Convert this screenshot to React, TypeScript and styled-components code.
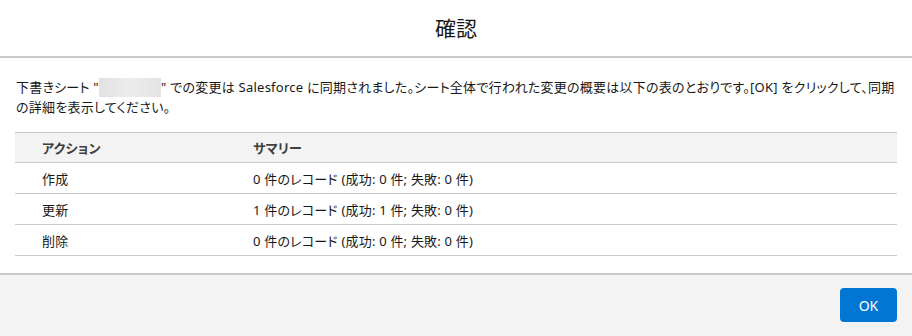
import React from "react";
import styled, { createGlobalStyle } from "styled-components";

const Global = createGlobalStyle`
  html, body { margin: 0; padding: 0; background: #ffffff; }
  body {
    font-family: "Noto Sans", "Noto Sans CJK JP", sans-serif;
    color: #181818;
    -webkit-font-smoothing: antialiased;
  }
`;

const Modal = styled.div`
  height: 336px;
  display: flex;
  flex-direction: column;
  background: #ffffff;
`;

const Header = styled.header`
  height: 56px;
  display: flex;
  align-items: center;
  justify-content: center;
  border-bottom: 2px solid #c9c9c9;
  box-sizing: content-box;
`;

const Title = styled.h2`
  margin: 0;
  font-size: 21px;
  font-weight: 400;
  color: #181818;
  line-height: 1;
`;

const Body = styled.div`
  padding: 19px 15px 0;
`;

const Message = styled.p`
  margin: 0 0 15px 1px;
  font-size: 13px;
  line-height: 20px;
  letter-spacing: 0.25px;
  font-feature-settings: "palt";
  color: #181818;
`;

const Redacted = styled.span`
  display: inline-block;
  width: 62px;
  height: 19px;
  vertical-align: -5px;
  background: linear-gradient(90deg, #e2e2e2, #ececec 50%, #e4e4e4);
  filter: blur(0.4px);
`;

const Table = styled.div`
  display: flex;
  flex-direction: column;
  border-top: 1px solid #c9c9c9;
`;

const Row = styled.div<{ $head?: boolean }>`
  display: grid;
  grid-template-columns: 211px 1fr;
  height: ${(p) => (p.$head ? "29px" : "30px")};
  align-items: center;
  border-bottom: 1px solid #c9c9c9;
  background: ${(p) => (p.$head ? "#f3f3f3" : "#ffffff")};
  font-size: 13px;
  letter-spacing: 0.2px;
  font-weight: ${(p) => (p.$head ? 700 : 400)};
  color: ${(p) => (p.$head ? "#3e3e3c" : "#181818")};
  font-feature-settings: "palt";
`;

const Cell = styled.div`
  padding-left: 27px;
  white-space: nowrap;
`;

const Footer = styled.footer`
  margin-top: auto;
  border-top: 2px solid #c9c9c9;
  background: #f3f3f3;
  padding: 13px 15px 14px;
  display: flex;
  justify-content: flex-end;
`;

const Button = styled.button`
  width: 57px;
  height: 34px;
  border: none;
  border-radius: 4px;
  background: #0176d3;
  color: #ffffff;
  font-family: "Noto Sans", sans-serif;
  font-size: 14px;
  cursor: pointer;
  padding: 0;
`;

const rows = [
  { action: "作成", summary: "0 件のレコード (成功: 0 件; 失敗: 0 件)" },
  { action: "更新", summary: "1 件のレコード (成功: 1 件; 失敗: 0 件)" },
  { action: "削除", summary: "0 件のレコード (成功: 0 件; 失敗: 0 件)" },
];

export default function App() {
  return (
    <>
      <Global />
      <Modal>
        <Header>
          <Title>確認</Title>
        </Header>
        <Body>
          <Message>
            下書きシート "<Redacted />" での変更は Salesforce
            に同期されました。シート全体で行われた変更の概要は以下の表のとおりです。[OK]
            をクリックして、同期の詳細を表示してください。
          </Message>
          <Table>
            <Row $head>
              <Cell>アクション</Cell>
              <Cell>サマリー</Cell>
            </Row>
            {rows.map((r) => (
              <Row key={r.action}>
                <Cell>{r.action}</Cell>
                <Cell>{r.summary}</Cell>
              </Row>
            ))}
          </Table>
        </Body>
        <Footer>
          <Button>OK</Button>
        </Footer>
      </Modal>
    </>
  );
}
